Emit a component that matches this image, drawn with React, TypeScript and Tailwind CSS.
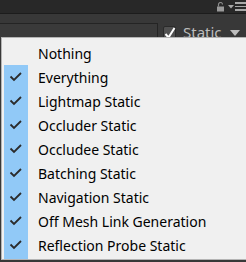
import React from "react";

const items = [
  "Everything",
  "Lightmap Static",
  "Occluder Static",
  "Occludee Static",
  "Batching Static",
  "Navigation Static",
  "Off Mesh Link Generation",
  "Reflection Probe Static",
];

function Check() {
  return (
    <svg width="24" height="24" viewBox="0 0 24 24" className="shrink-0">
      <path d="M6.5 11.5 L10 15 L17 8" fill="none" stroke="#2b2b2b" strokeWidth="1.8" />
    </svg>
  );
}

export default function App() {
  return (
    <div className="relative w-[246px] h-[262px] overflow-hidden bg-[#383838] font-['Noto_Sans',sans-serif]">
      {/* window header */}
      <div className="h-[13px] bg-[#282828] flex items-center justify-end gap-[3px] pr-0">
        <svg width="9" height="10" viewBox="0 0 9 10">
          <path d="M2.5 4.5 V2.5 a2 2 0 0 1 4 0" fill="none" stroke="#8a8a8a" strokeWidth="1.2" />
          <rect x="1" y="4.5" width="7" height="5" fill="#9a9a9a" />
        </svg>
        <div className="flex items-center gap-[1px]">
          <svg width="6" height="4" viewBox="0 0 6 4">
            <path d="M0 0 H6 L3 3.5 Z" fill="#a8a8a8" />
          </svg>
          <div className="flex flex-col gap-[2px] w-[11px]">
            <div className="h-[1.5px] bg-[#a8a8a8]" />
            <div className="h-[1.5px] bg-[#a8a8a8]" />
            <div className="h-[1.5px] bg-[#a8a8a8]" />
          </div>
        </div>
      </div>
      <div className="h-px bg-[#1c1c1c]" />

      {/* inspector row */}
      <div className="flex items-start pt-[9px]">
        <div className="w-[158px] h-[20px] bg-[#3a3a3a] border-t border-r border-[#242424]" />
        <div className="ml-[5px] mt-[2px] flex items-center">
          <div className="relative w-[13px] h-[13px] bg-[#505050] border border-[#2a2a2a] rounded-[2px]">
            <svg width="14" height="14" viewBox="0 0 14 14" className="absolute -left-[1px] -top-[1px]">
              <path d="M2.5 8 L5.5 11.5 L11.5 2" fill="none" stroke="#ffffff" strokeWidth="2" />
            </svg>
          </div>
          <span className="ml-[7px] text-[15px] leading-none text-[#bdbdbd]">Static</span>
          <svg width="10" height="6" viewBox="0 0 10 6" className="ml-[8px]">
            <path d="M0 0 H10 L5 6 Z" fill="#bdbdbd" />
          </svg>
        </div>
      </div>

      {/* popup menu */}
      <div className="absolute left-[1px] top-[37px] w-[250px] h-[223px] bg-[#f0f0f0] border border-[#b4b4b4] pt-[3px] pl-[2px] text-[14px] text-black">
        <div className="h-[24px] flex items-center">
          <div className="w-[24px]" />
          <span className="ml-[10px]">Nothing</span>
        </div>
        <div className="w-fit pb-[2px] bg-[linear-gradient(to_right,#91c9f7_0,#91c9f7_24px,transparent_24px)]">
          {items.map((t) => (
            <div key={t} className="h-[24px] flex items-center">
              <Check />
              <span className="ml-[10px] whitespace-nowrap">{t}</span>
            </div>
          ))}
        </div>
      </div>
    </div>
  );
}
